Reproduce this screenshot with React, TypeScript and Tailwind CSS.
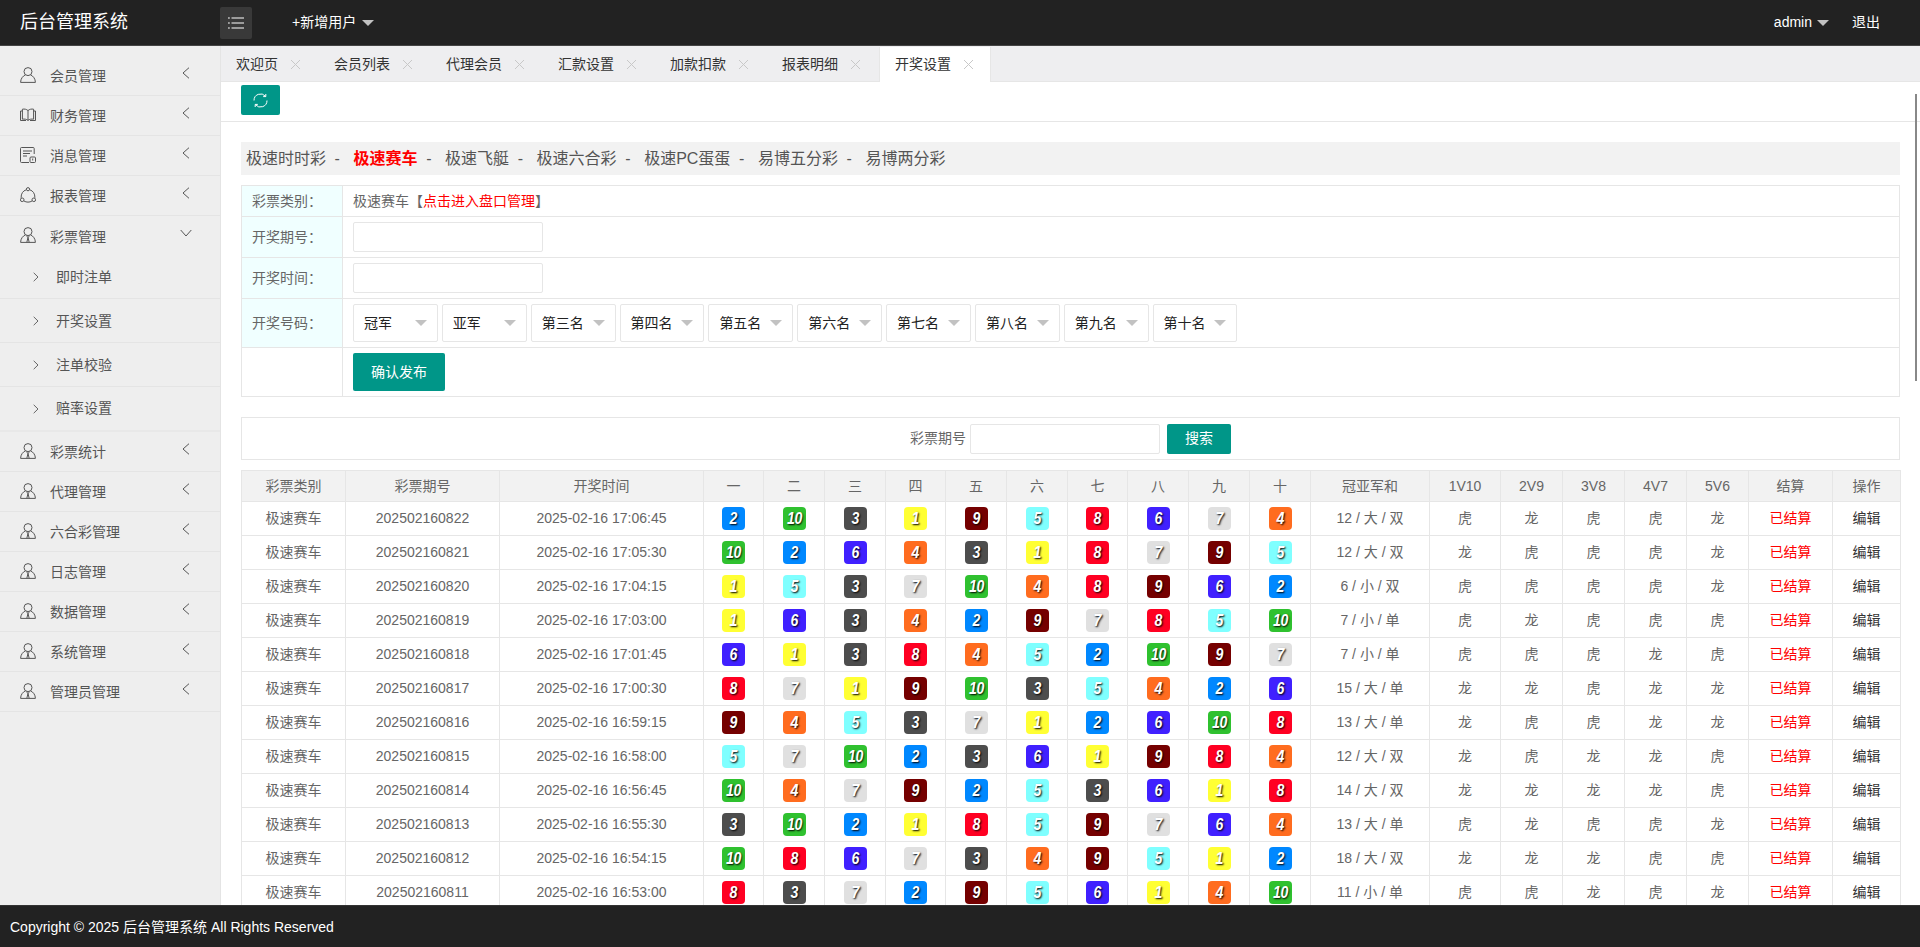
import type { ReactNode } from "react";

const FONT = "font-['Liberation_Sans','Noto_Sans_CJK_SC',sans-serif]";

const badgeColors: Record<number, string> = {
  1: "bg-[#ffff33]",
  2: "bg-[#0088ff]",
  3: "bg-[#4d4d4d]",
  4: "bg-[#ff6c1f]",
  5: "bg-[#7fffff]",
  6: "bg-[#4020ff]",
  7: "bg-[#e0e0e0]",
  8: "bg-[#ff0022]",
  9: "bg-[#750000]",
  10: "bg-[#2fc12f]",
};

const rows: [string, string, number[], string, string][] = [
  ["202502160822", "2025-02-16 17:06:45", [2, 10, 3, 1, 9, 5, 8, 6, 7, 4], "12 / 大 / 双", "虎龙虎虎龙"],
  ["202502160821", "2025-02-16 17:05:30", [10, 2, 6, 4, 3, 1, 8, 7, 9, 5], "12 / 大 / 双", "龙虎虎虎龙"],
  ["202502160820", "2025-02-16 17:04:15", [1, 5, 3, 7, 10, 4, 8, 9, 6, 2], "6 / 小 / 双", "虎虎虎虎龙"],
  ["202502160819", "2025-02-16 17:03:00", [1, 6, 3, 4, 2, 9, 7, 8, 5, 10], "7 / 小 / 单", "虎龙虎虎虎"],
  ["202502160818", "2025-02-16 17:01:45", [6, 1, 3, 8, 4, 5, 2, 10, 9, 7], "7 / 小 / 单", "虎虎虎龙虎"],
  ["202502160817", "2025-02-16 17:00:30", [8, 7, 1, 9, 10, 3, 5, 4, 2, 6], "15 / 大 / 单", "龙龙虎龙龙"],
  ["202502160816", "2025-02-16 16:59:15", [9, 4, 5, 3, 7, 1, 2, 6, 10, 8], "13 / 大 / 单", "龙虎虎龙龙"],
  ["202502160815", "2025-02-16 16:58:00", [5, 7, 10, 2, 3, 6, 1, 9, 8, 4], "12 / 大 / 双", "龙虎龙龙虎"],
  ["202502160814", "2025-02-16 16:56:45", [10, 4, 7, 9, 2, 5, 3, 6, 1, 8], "14 / 大 / 双", "龙龙龙龙虎"],
  ["202502160813", "2025-02-16 16:55:30", [3, 10, 2, 1, 8, 5, 9, 7, 6, 4], "13 / 大 / 单", "虎龙虎虎龙"],
  ["202502160812", "2025-02-16 16:54:15", [10, 8, 6, 7, 3, 4, 9, 5, 1, 2], "18 / 大 / 双", "龙龙龙虎虎"],
  ["202502160811", "2025-02-16 16:53:00", [8, 3, 7, 2, 9, 5, 6, 1, 4, 10], "11 / 小 / 单", "虎虎龙虎龙"],
];

const colWidths = [
  "w-[104px]", "w-[154px]", "w-[204px]",
  "w-[60px]", "w-[61px]", "w-[61px]", "w-[60px]", "w-[61px]", "w-[61px]", "w-[60px]", "w-[61px]", "w-[61px]", "w-[61px]",
  "w-[119px]", "w-[71px]", "w-[62px]", "w-[62px]", "w-[62px]", "w-[62px]", "w-[84px]", "w-[68px]",
];

const headers = ["彩票类别", "彩票期号", "开奖时间", "一", "二", "三", "四", "五", "六", "七", "八", "九", "十", "冠亚军和", "1V10", "2V9", "3V8", "4V7", "5V6", "结算", "操作"];

const tabs = ["欢迎页", "会员列表", "代理会员", "汇款设置", "加款扣款", "报表明细", "开奖设置"];
const lotteries = ["极速时时彩", "极速赛车", "极速飞艇", "极速六合彩", "极速PC蛋蛋", "易博五分彩", "易博两分彩"];
const picks = ["冠军", "亚军", "第三名", "第四名", "第五名", "第六名", "第七名", "第八名", "第九名", "第十名"];

function UserIcon() {
  return (
    <svg width="16" height="16" viewBox="0 0 16 16" fill="none" stroke="#555" strokeWidth="1">
      <circle cx="8" cy="4.6" r="4" />
      <path d="M5.2 8C3 9 .6 11.6.6 15.4h14.8C15.4 11.6 13 9 10.8 8" />
    </svg>
  );
}

function BookIcon() {
  return (
    <svg width="16" height="16" viewBox="0 0 16 16" fill="none" stroke="#555" strokeWidth="1">
      <path d="M8 3.6C6.6 2.2 4.4 1.8 2.4 2.2v10c2-.4 4.2 0 5.6 1.2 1.4-1.2 3.6-1.6 5.6-1.2v-10C11.6 1.8 9.400 2.200 8 3.600V13.400" />
      <path d="M2.400 4H.5v9.500h5.500M13.600 4h1.900v9.500H10" />
    </svg>
  );
}

function DocIcon() {
  return (
    <svg width="16" height="16" viewBox="0 0 16 16" fill="none" stroke="#555" strokeWidth="1">
      <path d="M14.200 7V1.500a1 1 0 0 0-1-1H1.500a1 1 0 0 0-1 1v13a1 1 0 0 0 1 1H9" />
      <path d="M3 4h9M3 6.500h7M3 9h4" />
      <rect x="10" y="10" width="5.500" height="5.500" rx="1" />
      <path d="M12.700 11.500v2" />
    </svg>
  );
}

function NodesIcon() {
  return (
    <svg width="16" height="16" viewBox="0 0 16 16" fill="none" stroke="#555" strokeWidth="1">
      <circle cx="8" cy="2.200" r="1.600" />
      <circle cx="2.200" cy="12.800" r="1.800" />
      <circle cx="13.800" cy="12.800" r="1.800" />
      <path d="M6.200 2.800C3 3.800 1 6.500 1.100 10.800M9.800 2.800c3.200 1 5.200 3.700 5.100 8M4 14c2.400 1.500 5.600 1.500 8 0" />
    </svg>
  );
}

function TieUserIcon() {
  return (
    <svg width="16" height="16" viewBox="0 0 16 16" fill="none" stroke="#555" strokeWidth="1">
      <circle cx="8" cy="4.600" r="4" />
      <path d="M5.200 8C3 9 .6 11.600.6 15.400h14.800C15.400 11.600 13 9 10.800 8" />
      <path d="M6.300 8.800 8 10.400l1.700-1.600M8 10.400 6.800 15.400M8 10.400l1.200 5" />
    </svg>
  );
}

function ChevronLeft() {
  return (
    <svg width="8" height="12" viewBox="0 0 8 12" fill="none" stroke="#555" strokeWidth="1">
      <path d="M7 .7 1 6l6 5.300" />
    </svg>
  );
}

function MenuRow({ icon, label, open }: { icon: ReactNode; label: string; open?: boolean }) {
  return (
    <div className={`flex items-center pl-[20px] ${open ? "h-[39px] pt-[1px]" : "h-[40px] border-b border-[#e4e4e4]"}`}>
      <span className="flex w-[16px] -translate-y-[1px]">{icon}</span>
      <span className="ml-[14px] translate-y-[1px] text-[14px] text-[#555]">{label}</span>
      {open ? (
        <svg className="ml-auto mr-[28px] -mt-[6px]" width="12" height="8" viewBox="0 0 12 8" fill="none" stroke="#555" strokeWidth="1">
          <path d="M.7 1 6 7l5.300-6" />
        </svg>
      ) : (
        <span className="ml-auto mr-[30px] -mt-[5px] flex">
          <ChevronLeft />
        </span>
      )}
    </div>
  );
}

function SubRow({ label, last }: { label: string; last?: boolean }) {
  return (
    <div className={`flex items-center pl-[33px] ${last ? "h-[45px] border-b-[2px] border-[#e8e8e8]" : "h-[44px] border-b border-[#e4e4e4]"}`}>
      <svg width="6" height="10" viewBox="0 0 6 10" fill="none" stroke="#666" strokeWidth="1">
        <path d="M.7.8 5 5 .7 9.200" />
      </svg>
      <span className={`ml-[17px] text-[14px] text-[#555] ${last ? "" : "translate-y-[1px]"}`}>{label}</span>
    </div>
  );
}

function Caret({ color }: { color: string }) {
  return <span className={`inline-block h-0 w-0 border-x-[6px] border-t-[6px] border-x-transparent ${color}`} />;
}

function Badge({ n }: { n: number }) {
  return (
    <span className={`mx-auto flex h-[23px] w-[23px] items-center justify-center rounded-[4px] ${badgeColors[n]}`}>
      <span className="inline-block scale-x-[0.88] text-[16px] font-bold italic leading-none tracking-[-0.5px] text-white [text-shadow:1px_1px_2px_#000]">
        {n}
      </span>
    </span>
  );
}

function Sidebar() {
  return (
    <aside className="w-[221px] shrink-0 border-r border-[#e4e4e4] bg-[#eeeeee] pt-[10px]">
      <MenuRow icon={<UserIcon />} label="会员管理" />
      <MenuRow icon={<BookIcon />} label="财务管理" />
      <MenuRow icon={<DocIcon />} label="消息管理" />
      <MenuRow icon={<NodesIcon />} label="报表管理" />
      <MenuRow icon={<TieUserIcon />} label="彩票管理" open />
      <SubRow label="即时注单" />
      <SubRow label="开奖设置" />
      <SubRow label="注单校验" />
      <SubRow label="赔率设置" last />
      <MenuRow icon={<TieUserIcon />} label="彩票统计" />
      <MenuRow icon={<TieUserIcon />} label="代理管理" />
      <MenuRow icon={<TieUserIcon />} label="六合彩管理" />
      <MenuRow icon={<TieUserIcon />} label="日志管理" />
      <MenuRow icon={<TieUserIcon />} label="数据管理" />
      <MenuRow icon={<TieUserIcon />} label="系统管理" />
      <MenuRow icon={<TieUserIcon />} label="管理员管理" />
    </aside>
  );
}

function TabBar() {
  return (
    <div className="flex h-[36px] shrink-0 border-b border-[#e6e6e6] bg-[#eeeef0] pt-[1px]">
      {tabs.map((t, i) => {
        const active = i === tabs.length - 1;
        return (
          <div
            key={t}
            className={`flex h-[35px] items-center text-[14px] text-[#333] ${i === 0 ? "w-[98px] pl-[15px]" : "w-[112px] pl-[15px]"} ${active ? "border-x border-[#e6e6e6] bg-white" : ""}`}
          >
            <span>{t}</span>
            <svg className="ml-[12px]" width="11" height="11" viewBox="0 0 11 11" stroke="#c8c8c8" strokeWidth="1">
              <path d="M1 1l9 9M10 1l-9 9" />
            </svg>
          </div>
        );
      })}
    </div>
  );
}

function LotteryNav() {
  return (
    <div className="flex h-[33px] items-center bg-[#f2f2f2] pl-[5px] text-[16px] text-[#555]">
      {lotteries.map((l, i) => (
        <span key={l} className="flex items-center">
          <span className={i === 1 ? "font-bold text-[#ff0000]" : ""}>{l}</span>
          {i < lotteries.length - 1 && <span className="ml-[8.6px] mr-[13.6px]">-</span>}
        </span>
      ))}
    </div>
  );
}

function FormTable() {
  const label = "border border-[#e6e6e6] bg-[#f0ffff] pl-[10px] text-[#666] font-normal text-left";
  const cell = "border border-[#e6e6e6] pl-[10px]";
  const input = "block h-[30px] w-[190px] rounded-[2px] border border-[#e6e6e6] bg-white outline-none";
  return (
    <table className="mt-[10px] w-full table-fixed border-collapse text-[14px]">
      <colgroup>
        <col className="w-[101px]" />
        <col />
      </colgroup>
      <tbody>
        <tr className="h-[31px]">
          <th className={label}>彩票类别：</th>
          <td className={`${cell} text-[#666]`}>
            极速赛车【<span className="text-[#ff0000]">点击进入盘口管理</span>】
          </td>
        </tr>
        <tr className="h-[41px]">
          <th className={label}>开奖期号：</th>
          <td className={cell}>
            <input className={input} />
          </td>
        </tr>
        <tr className="h-[41px]">
          <th className={label}>开奖时间：</th>
          <td className={cell}>
            <input className={input} />
          </td>
        </tr>
        <tr className="h-[49px]">
          <th className={label}>开奖号码：</th>
          <td className={cell}>
            <div className="flex gap-[4px]">
              {picks.map((p) => (
                <div key={p} className="flex h-[38px] w-[84.85px] items-center justify-between rounded-[2px] border border-[#e6e6e6] bg-white pl-[10px] pr-[10px] text-[#222]">
                  <span>{p}</span>
                  <Caret color="border-t-[#c2c2c2]" />
                </div>
              ))}
            </div>
          </td>
        </tr>
        <tr className="h-[49px]">
          <td className={cell} />
          <td className={cell}>
            <button className="block h-[38px] w-[92px] rounded-[2px] bg-[#009688] text-[14px] text-white">确认发布</button>
          </td>
        </tr>
      </tbody>
    </table>
  );
}

function SearchBar() {
  return (
    <div className="mt-[20px] flex h-[43px] items-center justify-center border border-[#e6e6e6] text-[14px] text-[#666]">
      <span>彩票期号</span>
      <input className="ml-[4px] h-[30px] w-[190px] rounded-[2px] border border-[#e6e6e6] outline-none" />
      <button className="ml-[7px] h-[30px] w-[64px] rounded-[2px] bg-[#009688] text-white">搜索</button>
    </div>
  );
}

function DataTable() {
  const td = "border border-[#e6e6e6] text-center";
  return (
    <table className="mt-[10px] w-full table-fixed border-collapse text-[14px] text-[#666]">
      <colgroup>
        {colWidths.map((w, i) => (
          <col key={i} className={w} />
        ))}
      </colgroup>
      <thead>
        <tr className="h-[31px] bg-[#f2f2f2]">
          {headers.map((h) => (
            <th key={h} className={`${td} font-normal`}>
              {h}
            </th>
          ))}
        </tr>
      </thead>
      <tbody>
        {rows.map(([issue, time, balls, sum, vs]) => (
          <tr key={issue} className="h-[34px]">
            <td className={td}>极速赛车</td>
            <td className={td}>{issue}</td>
            <td className={td}>{time}</td>
            {balls.map((b, i) => (
              <td key={i} className={td}>
                <Badge n={b} />
              </td>
            ))}
            <td className={td}>{sum}</td>
            {vs.split("").map((v, i) => (
              <td key={i} className={td}>
                {v}
              </td>
            ))}
            <td className={`${td} text-[#ff0000]`}>已结算</td>
            <td className={`${td} text-[#333]`}>编辑</td>
          </tr>
        ))}
      </tbody>
    </table>
  );
}

export default function App() {
  return (
    <div className={`flex h-[947px] w-[1920px] flex-col overflow-hidden bg-white ${FONT}`}>
      <header className="flex h-[46px] shrink-0 items-center border-b border-[#444] bg-[#222222] text-[14px] text-white">
        <div className="w-[220px] pl-[20px] text-[18px]">后台管理系统</div>
        <button className="flex h-[32px] w-[32px] items-center justify-center rounded-[2px] bg-[#393939]">
          <svg width="16" height="12" viewBox="0 0 16 12" stroke="#fff" strokeWidth="1.200">
            <path d="M3.500 1H16M3.500 6H16M3.500 11H16" />
            <path d="M0 1h1.800M0 6h1.800M0 11h1.800" />
          </svg>
        </button>
        <span className="ml-[40px]">+新增用户</span>
        <span className="ml-[6px] flex">
          <Caret color="border-t-[#c2c2c2]" />
        </span>
        <span className="ml-auto">admin</span>
        <span className="ml-[5px] flex">
          <Caret color="border-t-[#c2c2c2]" />
        </span>
        <span className="ml-[23px] mr-[40px]">退出</span>
      </header>
      <div className="flex min-h-0 flex-1">
        <Sidebar />
        <main className="relative flex min-w-0 flex-1 flex-col">
          <TabBar />
          <div className="flex h-[40px] shrink-0 items-start border-b border-[#e6e6e6] pl-[20px] pt-[3px]">
            <button className="flex h-[30px] w-[39px] items-center justify-center rounded-[2px] bg-[#009688]">
              <svg width="15" height="15" viewBox="0 0 15 15" fill="none" stroke="#fff" strokeWidth="1">
                <path d="M1 7.500A6.500 6.500 0 0 1 12.500 3.300M14 7.500A6.500 6.500 0 0 1 2.500 11.700" />
                <path d="M12.800 1v2.600h-2.600M2.200 14v-2.600h2.600" />
              </svg>
            </button>
          </div>
          <div className="min-h-0 flex-1 overflow-hidden px-[20px] pt-[20px]">
            <LotteryNav />
            <FormTable />
            <SearchBar />
            <DataTable />
          </div>
          <div className="absolute right-[3px] top-[48px] h-[287px] w-[2px] bg-[#888]" />
        </main>
      </div>
      <footer className="flex h-[42px] shrink-0 items-center border-t border-[#333] bg-[#222222] pl-[10px] pt-[2px] text-[14px] text-white">
        Copyright © 2025 后台管理系统 All Rights Reserved
      </footer>
    </div>
  );
}
